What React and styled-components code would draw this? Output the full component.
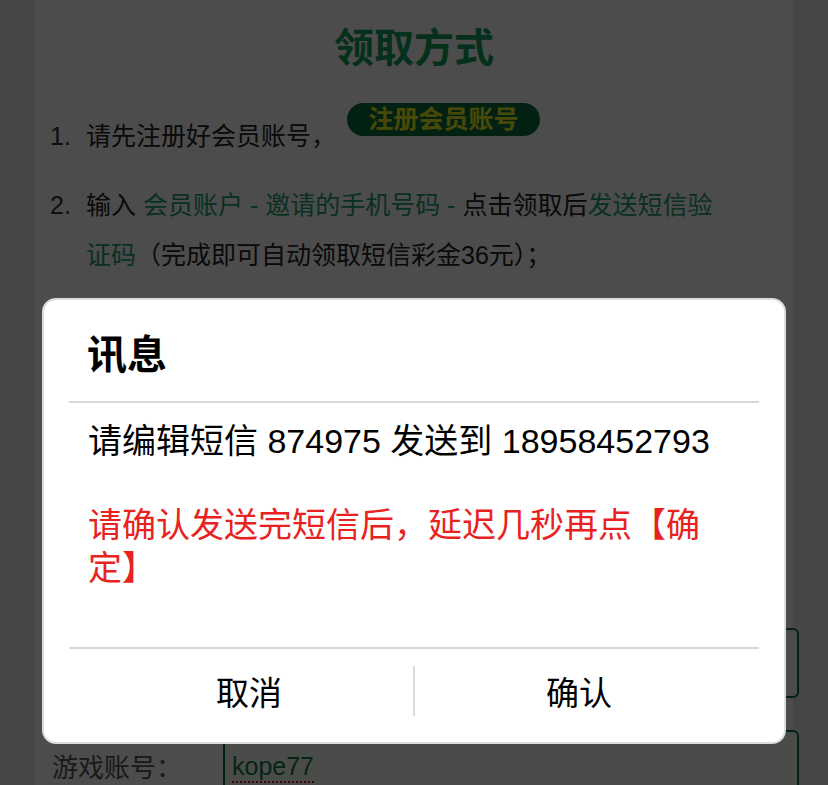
import React from 'react'
import styled, { createGlobalStyle } from 'styled-components'

const GlobalStyle = createGlobalStyle`
  html, body {
    margin: 0;
    height: 100%;
    overflow: hidden;
    background: #ececec;
  }
  body {
    font-family: "Liberation Sans", "Noto Sans CJK SC", sans-serif;
    color: #333;
  }
`

const Page = styled.div`
  padding: 0 35px;
  height: 100vh;
`

const Card = styled.div`
  background: #fff;
  padding: 22px 15px 40px;
  min-height: 100%;
  box-sizing: border-box;
`

const Heading = styled.h2`
  margin: 0;
  font-size: 40px;
  line-height: 52px;
  font-weight: bold;
  text-align: center;
  color: #13a05c;
`

const Steps = styled.div`
  margin-top: 37px;
`

const Step = styled.div`
  display: flex;
  font-size: 25px;
  line-height: 50px;
  & + & {
    margin-top: 19px;
  }
`

const Num = styled.span`
  flex: 0 0 36px;
`

const StepBody = styled.div`
  flex: 1;
  max-width: 650px;
  color: #222;
`

const Hl = styled.span`
  color: #22a070;
`

const RegisterButton = styled.span`
  display: inline-block;
  vertical-align: top;
  margin: -8px 0 0 11px;
  width: 193px;
  height: 33px;
  line-height: 33px;
  border-radius: 17px;
  background: #07703d;
  color: #f2f21e;
  font-weight: bold;
  font-size: 25px;
  text-align: center;
`

const Form = styled.div`
  margin-top: 348px;
  display: flex;
  flex-direction: column;
  gap: 32px;
`

const FieldRow = styled.div`
  display: flex;
  align-items: center;
`

const Label = styled.span`
  flex: 0 0 171px;
  padding-left: 2px;
  font-size: 26px;
  color: #555;
`

const Field = styled.div`
  flex: 0 0 576px;
  height: 70px;
  box-sizing: border-box;
  border: 2px solid #0d7040;
  border-radius: 6px;
  background: #f6fff6;
  padding: 6px 7px 0;
  font-size: 25px;
  line-height: 56px;
  color: #137a4c;
`

const Typed = styled.span`
  text-decoration: underline dotted #d01818;
  text-decoration-thickness: 2px;
  text-underline-offset: 6px;
`

const Overlay = styled.div`
  position: fixed;
  inset: 0;
  background: rgba(0, 0, 0, 0.7);
  display: flex;
  justify-content: center;
  align-items: flex-start;
  padding-top: 298px;
`

const Dialog = styled.div`
  width: 744px;
  box-sizing: border-box;
  background: #fff;
  border: 2px solid #dcdcdc;
  border-radius: 14px;
  padding: 0 25px;
  color: #000;
`

const DialogHeader = styled.div`
  height: 103px;
  box-sizing: border-box;
  padding: 27px 18px 0;
  border-bottom: 2px solid #d8d8d8;
  font-size: 40px;
  line-height: 56px;
  font-weight: bold;
`

const DialogBody = styled.div`
  padding: 17px 19px 57px;
  font-size: 34px;
  line-height: 43px;
`

const Warning = styled.div`
  margin-top: 41px;
  color: #e8231f;
`

const DialogFooter = styled.div`
  display: flex;
  height: 95px;
  box-sizing: border-box;
  border-top: 2px solid #d8d8d8;
  padding: 0 16px 9px;
`

const FooterButton = styled.button`
  flex: 1;
  border: 0;
  background: none;
  padding: 0;
  font-family: inherit;
  font-size: 33px;
  color: #000;
`

const FooterDivider = styled.span`
  flex: 0 0 2px;
  align-self: center;
  height: 50px;
  background: #dcdcdc;
`

export default function App() {
  return (
    <>
      <GlobalStyle />
      <Page>
        <Card>
          <Heading>领取方式</Heading>
          <Steps>
            <Step>
              <Num>1.</Num>
              <StepBody>
                请先注册好会员账号，<RegisterButton>注册会员账号</RegisterButton>
              </StepBody>
            </Step>
            <Step>
              <Num>2.</Num>
              <StepBody>
                输入 <Hl>会员账户 - 邀请的手机号码 - </Hl>点击领取后<Hl>发送短信验证码</Hl>（完成即可自动领取短信彩金36元）；
              </StepBody>
            </Step>
          </Steps>
          <Form>
            <FieldRow>
              <Label>手机号码：</Label>
              <Field />
            </FieldRow>
            <FieldRow>
              <Label>游戏账号：</Label>
              <Field><Typed>kope77</Typed></Field>
            </FieldRow>
          </Form>
        </Card>
      </Page>
      <Overlay>
        <Dialog>
          <DialogHeader>讯息</DialogHeader>
          <DialogBody>
            <div>请编辑短信 874975 发送到 18958452793</div>
            <Warning>请确认发送完短信后，延迟几秒再点【确定】</Warning>
          </DialogBody>
          <DialogFooter>
            <FooterButton>取消</FooterButton>
            <FooterDivider />
            <FooterButton>确认</FooterButton>
          </DialogFooter>
        </Dialog>
      </Overlay>
    </>
  )
}
